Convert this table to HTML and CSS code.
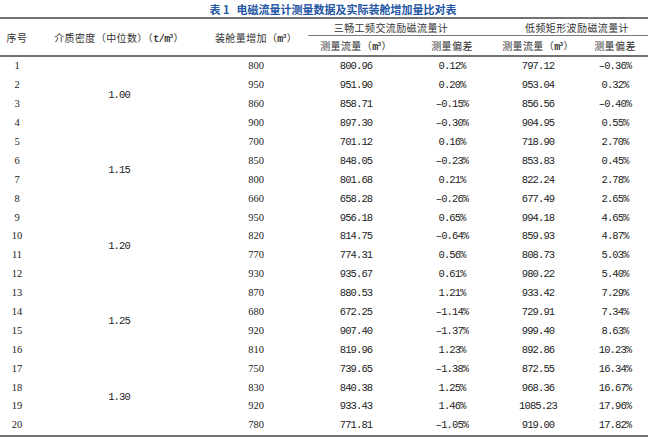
FILE: index.html
```html
<!DOCTYPE html>
<html lang="zh">
<head>
<meta charset="utf-8">
<title>表1 电磁流量计测量数据及实际装舱增加量比对表</title>
<link rel="stylesheet" href="styles.css">
</head>
<body>
<div class="caption"><span class="cap-no">表 1</span><span class="cap-text">电磁流量计测量数据及实际装舱增加量比对表</span></div>
<table class="data">
  <colgroup>
    <col class="c1"><col class="c2"><col class="c3"><col class="c4"><col class="c5"><col class="c6"><col class="c7">
  </colgroup>
  <thead>
    <tr class="h1">
      <th rowspan="2" class="hb">序号</th>
      <th rowspan="2" class="hb">介质密度（中位数）（<span class="lat">t/m</span><sup>3</sup>）</th>
      <th rowspan="2" class="hb">装舱量增加（<span class="lat">m</span><sup>3</sup>）</th>
      <th colspan="2" class="grp g1">三畅工频交流励磁流量计</th>
      <th colspan="2" class="grp g2">低频矩形波励磁流量计</th>
    </tr>
    <tr class="h2">
      <th class="hb">测量流量（<span class="lat">m</span><sup>3</sup>）</th>
      <th class="hb">测量偏差</th>
      <th class="hb">测量流量（<span class="lat">m</span><sup>3</sup>）</th>
      <th class="hb last">测量偏差</th>
    </tr>
  </thead>
  <tbody>
    <tr><td class="sr">1</td><td rowspan="4" class="mono">1.00</td><td class="sr">800</td><td class="mono">800.96</td><td class="mono">0.12%</td><td class="mono">797.12</td><td class="mono last">–0.36%</td></tr>
    <tr><td class="sr">2</td><td class="sr">950</td><td class="mono">951.90</td><td class="mono">0.20%</td><td class="mono">953.04</td><td class="mono last">0.32%</td></tr>
    <tr><td class="sr">3</td><td class="sr">860</td><td class="mono">858.71</td><td class="mono">–0.15%</td><td class="mono">856.56</td><td class="mono last">–0.40%</td></tr>
    <tr><td class="sr">4</td><td class="sr">900</td><td class="mono">897.30</td><td class="mono">–0.30%</td><td class="mono">904.95</td><td class="mono last">0.55%</td></tr>
    <tr><td class="sr">5</td><td rowspan="4" class="mono">1.15</td><td class="sr">700</td><td class="mono">701.12</td><td class="mono">0.16%</td><td class="mono">718.90</td><td class="mono last">2.70%</td></tr>
    <tr><td class="sr">6</td><td class="sr">850</td><td class="mono">848.05</td><td class="mono">–0.23%</td><td class="mono">853.83</td><td class="mono last">0.45%</td></tr>
    <tr><td class="sr">7</td><td class="sr">800</td><td class="mono">801.68</td><td class="mono">0.21%</td><td class="mono">822.24</td><td class="mono last">2.78%</td></tr>
    <tr><td class="sr">8</td><td class="sr">660</td><td class="mono">658.28</td><td class="mono">–0.26%</td><td class="mono">677.49</td><td class="mono last">2.65%</td></tr>
    <tr><td class="sr">9</td><td rowspan="4" class="mono">1.20</td><td class="sr">950</td><td class="mono">956.18</td><td class="mono">0.65%</td><td class="mono">994.18</td><td class="mono last">4.65%</td></tr>
    <tr><td class="sr">10</td><td class="sr">820</td><td class="mono">814.75</td><td class="mono">–0.64%</td><td class="mono">859.93</td><td class="mono last">4.87%</td></tr>
    <tr><td class="sr">11</td><td class="sr">770</td><td class="mono">774.31</td><td class="mono">0.56%</td><td class="mono">808.73</td><td class="mono last">5.03%</td></tr>
    <tr><td class="sr">12</td><td class="sr">930</td><td class="mono">935.67</td><td class="mono">0.61%</td><td class="mono">980.22</td><td class="mono last">5.40%</td></tr>
    <tr><td class="sr">13</td><td rowspan="4" class="mono">1.25</td><td class="sr">870</td><td class="mono">880.53</td><td class="mono">1.21%</td><td class="mono">933.42</td><td class="mono last">7.29%</td></tr>
    <tr><td class="sr">14</td><td class="sr">680</td><td class="mono">672.25</td><td class="mono">–1.14%</td><td class="mono">729.91</td><td class="mono last">7.34%</td></tr>
    <tr><td class="sr">15</td><td class="sr">920</td><td class="mono">907.40</td><td class="mono">–1.37%</td><td class="mono">999.40</td><td class="mono last">8.63%</td></tr>
    <tr><td class="sr">16</td><td class="sr">810</td><td class="mono">819.96</td><td class="mono">1.23%</td><td class="mono">892.86</td><td class="mono last">10.23%</td></tr>
    <tr><td class="sr">17</td><td rowspan="4" class="mono">1.30</td><td class="sr">750</td><td class="mono">739.65</td><td class="mono">–1.38%</td><td class="mono">872.55</td><td class="mono last">16.34%</td></tr>
    <tr><td class="sr">18</td><td class="sr">830</td><td class="mono">840.38</td><td class="mono">1.25%</td><td class="mono">968.36</td><td class="mono last">16.67%</td></tr>
    <tr><td class="sr">19</td><td class="sr">920</td><td class="mono">933.43</td><td class="mono">1.46%</td><td class="mono">1085.23</td><td class="mono last">17.96%</td></tr>
    <tr><td class="sr">20</td><td class="sr">780</td><td class="mono">771.81</td><td class="mono">–1.05%</td><td class="mono">919.00</td><td class="mono last">17.82%</td></tr>
  </tbody>
</table>
</body>
</html>
```
FILE: styles.css
```css
html, body {
  margin: 0;
  padding: 0;
  background: #ffffff;
}
body {
  width: 648px;
  height: 440px;
  overflow: hidden;
  font-family: "Noto Sans CJK SC", "Liberation Sans", sans-serif;
  color: #2a2a2a;
}
.caption {
  box-sizing: border-box;
  height: 17px;
  padding-top: 2px;
  padding-left: 18px;
  display: flex;
  align-items: center;
  justify-content: center;
  gap: 7px;
  color: #2456a4;
  font-weight: 700;
  font-size: 11px;
  line-height: 15px;
}
.cap-no {
  letter-spacing: 0;
}
.data {
  width: 648px;
  table-layout: fixed;
  border-collapse: separate;
  border-spacing: 0;
  border-top: 2px solid #727272;
  border-bottom: 2px solid #727272;
}
.c1 { width: 34px; }
.c2 { width: 170px; }
.c3 { width: 104px; }
.c4 { width: 96px; }
.c5 { width: 96px; }
.c6 { width: 76px; }
.c7 { width: 72px; }
th {
  padding: 0;
  font-weight: 400;
  font-size: 10px;
  letter-spacing: 0.4px;
  color: #333333;
  text-align: center;
  vertical-align: middle;
  white-space: nowrap;
}
.h1 { height: 17px; }
.h2 { height: 21px; }
.grp {
  border-bottom: 1px solid #7a7a7a;
}
.g1 { padding-right: 26px; }
.g2 { padding-left: 6px; }
.hb {
  border-bottom: 2px solid #727272;
}
.h1 .hb { vertical-align: middle; }
.lat {
  font-family: "Liberation Mono", monospace;
  font-weight: 700;
  font-size: 10px;
  letter-spacing: -0.5px;
}
sup {
  font-family: "Liberation Sans", sans-serif;
  font-size: 6px;
  font-weight: 700;
  vertical-align: 4px;
  line-height: 0;
}
tbody tr { height: 18.9px; }
td {
  padding: 0;
  text-align: center;
  vertical-align: middle;
  white-space: nowrap;
  line-height: 12px;
  color: #222222;
}
.sr {
  font-family: "Liberation Serif", serif;
  font-size: 10.5px;
}
.mono {
  font-family: "Liberation Mono", monospace;
  font-size: 10.5px;
  letter-spacing: -0.9px;
}
.last { padding-left: 6px; }
```
